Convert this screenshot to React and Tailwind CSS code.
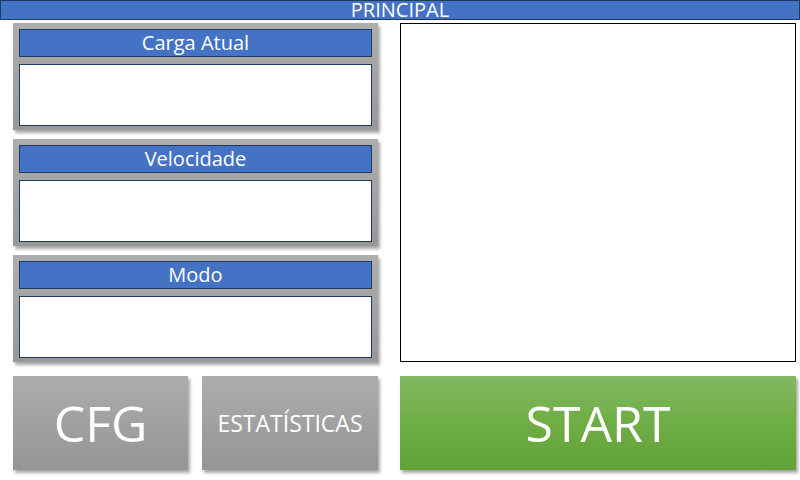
import React from "react";

function Panel({ title }) {
  return (
    <div className="h-[107px] flex flex-col pt-[6px] px-[6px] pb-[4px] bg-[linear-gradient(to_bottom,#aeaeae,#989898)] shadow-[2px_3px_3px_rgba(0,0,0,0.35)]">
      <div className="h-[28px] shrink-0 bg-[#4472c4] border border-[#1f3864] flex items-center justify-center text-white text-[20px] leading-none">
        {title}
      </div>
      <div className="mt-[7px] flex-1 bg-white border border-[#1f3864]" />
    </div>
  );
}

export default function App() {
  return (
    <div
      className="w-[800px] h-[480px] bg-white overflow-hidden flex flex-col"
      style={{ fontFamily: '"Open Sans", "Noto Sans", sans-serif' }}
    >
      <div className="h-[20px] shrink-0 bg-[#4472c4] border border-[#1f3864] flex items-center justify-center text-white text-[20px] leading-[18px]">
        <span className="-mt-[1px]">PRINCIPAL</span>
      </div>
      <div className="flex gap-[22px] pl-[13px] pr-[4px] pt-[3px]">
        <div className="w-[365px] flex flex-col gap-[9px]">
          <Panel title="Carga Atual" />
          <Panel title="Velocidade" />
          <Panel title="Modo" />
        </div>
        <div className="w-[396px] h-[339px] border border-black bg-white" />
      </div>
      <div className="flex gap-[22px] pl-[13px] pr-[4px] mt-[14px]">
        <div className="w-[365px] flex gap-[14px]">
          <div className="w-[175px] h-[94px] flex items-center justify-center text-white text-[50px] leading-none bg-[linear-gradient(to_bottom,#adadad,#959595)] shadow-[2px_3px_3px_rgba(0,0,0,0.35)]">
            CFG
          </div>
          <div className="w-[176px] h-[94px] flex items-center justify-center text-white text-[23px] leading-none bg-[linear-gradient(to_bottom,#adadad,#959595)] shadow-[2px_3px_3px_rgba(0,0,0,0.35)]">
            ESTATÍSTICAS
          </div>
        </div>
        <div className="w-[396px] h-[94px] flex items-center justify-center text-white text-[50px] leading-none bg-[linear-gradient(to_bottom,#82b963,#70ae47_45%,#62a238)] shadow-[2px_3px_3px_rgba(0,0,0,0.35)]">
          START
        </div>
      </div>
    </div>
  );
}
